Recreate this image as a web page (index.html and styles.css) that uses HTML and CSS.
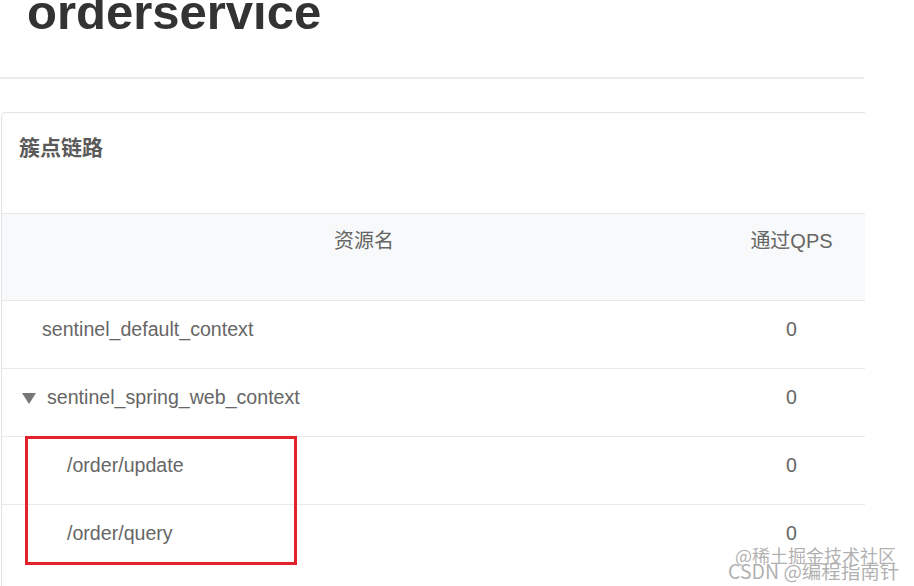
FILE: index.html
```html
<!DOCTYPE html>
<html lang="zh">
<head>
<meta charset="utf-8">
<link rel="stylesheet" href="styles.css">
</head>
<body>
<div class="page">
  <h1 class="title">orderservice</h1>
  <div class="divider"></div>
  <div class="panel">
    <div class="panel-heading">簇点链路</div>
    <div class="table">
      <div class="thead">
        <div class="th th-name">资源名</div>
        <div class="th th-qps">通过QPS</div>
      </div>
      <div class="row">
        <div class="cell name lvl0">sentinel_default_context</div>
        <div class="cell qps">0</div>
      </div>
      <div class="row">
        <div class="cell name lvl0t"><span class="caret"></span>sentinel_spring_web_context</div>
        <div class="cell qps">0</div>
      </div>
      <div class="row">
        <div class="cell name lvl1">/order/update</div>
        <div class="cell qps">0</div>
      </div>
      <div class="row row-last">
        <div class="cell name lvl1">/order/query</div>
        <div class="cell qps">0</div>
      </div>
    </div>
  </div>
  <div class="highlight"></div>
  <div class="watermark">
    <div class="wm1">@稀土掘金技术社区</div>
    <div class="wm2">CSDN @编程指南针</div>
  </div>
</div>
</body>
</html>
```

FILE: styles.css
```css
html, body {
  margin: 0;
  padding: 0;
  background: #fff;
}
body {
  font-family: "Liberation Sans", Arial, "Noto Sans CJK SC", sans-serif;
  color: #666;
  overflow: hidden;
  width: 914px;
  height: 586px;
}
.page {
  position: relative;
  display: flow-root;
  width: 914px;
  height: 586px;
  overflow: hidden;
}
.title {
  margin: -12px 0 0 27px;
  font-size: 49px;
  line-height: 49px;
  font-weight: bold;
  color: #333;
}
.divider {
  margin-top: 40px;
  width: 864px;
  height: 2px;
  background: #ebebeb;
}
.panel {
  margin: 33px 0 0 1px;
  width: 863px;
  border: 1px solid #e2e2e2;
  border-right: none;
  border-bottom: none;
  border-radius: 5px 0 0 0;
  height: 480px;
}
.panel-heading {
  padding: 20px 0 0 17px;
  height: 80px;
  line-height: 30px;
  font-size: 21px;
  font-weight: bold;
  color: #5a5a5a;
}
.table {
  width: 863px;
}
.thead {
  display: grid;
  grid-template-columns: 724px 1fr;
  background: #f8f9fa;
  border-top: 1px solid #e8e8e8;
  border-bottom: 1px solid #e8e8e8;
  height: 86px;
}
.th {
  padding-top: 12px;
  line-height: 30px;
  font-size: 20px;
  text-align: center;
  color: #666;
}
.th-qps {
  padding-right: 8px;
}
.row {
  display: grid;
  grid-template-columns: 724px 1fr;
  height: 67px;
  border-bottom: 1px solid #e9e9e9;
}
.row-last {
  border-bottom: none;
}
.cell {
  padding-top: 13px;
  line-height: 30px;
  font-size: 19.6px;
  color: #666;
}
.qps {
  text-align: center;
  padding-right: 8px;
}
.lvl0 { padding-left: 40px; }
.lvl0t { padding-left: 20px; display: flex; align-items: center; align-self: start; height: 30px; }
.lvl1 { padding-left: 65px; }
.caret {
  display: inline-block;
  width: 0;
  height: 0;
  border-left: 7px solid transparent;
  border-right: 7px solid transparent;
  border-top: 11px solid #777;
  margin: 3px 11px 0 0;
}
.highlight {
  position: absolute;
  left: 25px;
  top: 436px;
  width: 266px;
  height: 123px;
  border: 3px solid #e3222c;
}
.watermark {
  position: absolute;
  left: 726px;
  top: 544px;
  width: 188px;
  font-family: "Noto Sans CJK SC", sans-serif;
  color: rgba(150, 150, 150, 0.75);
  text-shadow: 0 0 1px #fff;
}
.wm1 {
  position: absolute;
  left: 9px;
  top: 0;
  font-size: 18px;
  line-height: 22px;
  white-space: nowrap;
}
.wm2 {
  position: absolute;
  left: 2px;
  top: 14px;
  font-size: 19.5px;
  line-height: 26px;
  white-space: nowrap;
}
```
